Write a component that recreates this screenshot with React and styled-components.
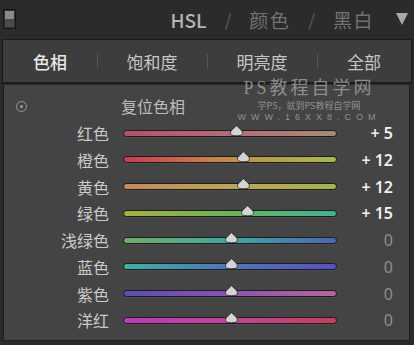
import React from "react";
import styled, { createGlobalStyle } from "styled-components";

const GlobalStyle = createGlobalStyle`
  html, body {
    margin: 0;
    padding: 0;
    background: #2b2b2b;
  }
  body {
    font-family: "Noto Sans", "Noto Sans CJK SC", sans-serif;
  }
`;

const cjk = `"Noto Sans CJK SC", "Noto Sans", sans-serif`;

const Frame = styled.div`
  width: 414px;
  height: 345px;
  background: #2b2b2b;
  display: flex;
  flex-direction: column;
  overflow: hidden;
`;

const Header = styled.div`
  height: 38px;
  display: flex;
  align-items: center;
  padding: 0 6px 0 3px;
  box-sizing: border-box;
`;

const PanelIcon = styled.div`
  width: 11px;
  height: 18px;
  border: 1px solid #161616;
  background: linear-gradient(#8a8a8a 0 50%, #4a4a4a 50% 100%);
  box-shadow: inset 0 0 0 1px #333;
`;

const Crumbs = styled.div`
  margin-left: auto;
  display: flex;
  align-items: center;
  font-family: ${cjk};
  font-size: 19px;
  color: #767676;
`;

const Crumb = styled.span`
  color: ${(p) => (p.$active ? "#b4b4b4" : "#727272")};
  font-weight: ${(p) => (p.$active ? 500 : 400)};
  letter-spacing: ${(p) => (p.$active ? "0" : "1.5px")};
`;

const Slash = styled.span`
  color: #5c5c5c;
  margin: 0 18px;
  font-size: 17px;
`;

const Arrow = styled.span`
  width: 0;
  height: 0;
  margin-left: 22px;
  border-left: 6px solid transparent;
  border-right: 6px solid transparent;
  border-top: 12px solid #a8a8a8;
`;

const Tabs = styled.div`
  height: 45px;
  margin: 1px 2px 0;
  background: #3d3d3d;
  border: 1px solid #1c1c1c;
  border-bottom-width: 2px;
  display: grid;
  grid-template-columns: 94px 110px 110px 1fr;
  align-items: center;
  box-sizing: border-box;
`;

const Tab = styled.div`
  position: relative;
  text-align: center;
  font-family: ${cjk};
  font-size: 17px;
  color: ${(p) => (p.$active ? "#e8e8e8" : "#c6c6c6")};
  font-weight: ${(p) => (p.$active ? 500 : 400)};
  &::before {
    content: "";
    display: ${(p) => (p.$first ? "none" : "block")};
    position: absolute;
    left: 0;
    top: 5px;
    bottom: 5px;
    width: 1px;
    background: #555;
  }
`;

const Panel = styled.div`
  position: relative;
  flex: 1;
  margin: 1px 4px 4px 3px;
  background: #444444;
  border: 1px solid #1e1e1e;
  border-top: none;
  padding-top: 8px;
  display: grid;
  grid-template-columns: 105px 214px 1fr;
  grid-auto-rows: 26.75px;
  column-gap: 14px;
  align-items: center;
`;

const ResetIcon = styled.div`
  justify-self: start;
  margin-left: 12px;
  width: 9px;
  height: 9px;
  border: 1.5px solid #9a9a9a;
  border-radius: 50%;
  display: flex;
  align-items: center;
  justify-content: center;
  &::after {
    content: "";
    width: 3px;
    height: 3px;
    border-radius: 50%;
    background: #9a9a9a;
  }
`;

const ResetText = styled.div`
  grid-column: 2 / 4;
  font-family: ${cjk};
  font-size: 16px;
  color: #bdbdbd;
  margin-left: -2px;
`;

const Label = styled.div`
  text-align: right;
  font-family: ${cjk};
  font-size: 16px;
  color: #cacaca;
`;

const Track = styled.div`
  position: relative;
  height: 5px;
  border: 1px solid #1d1d1d;
  border-radius: 4px;
  background: ${(p) => p.$gradient};
  box-shadow: 0 1px 0 rgba(255, 255, 255, 0.05);
`;

const Thumb = styled.svg`
  position: absolute;
  top: -6px;
  width: 13px;
  height: 11px;
  margin-left: -6.5px;
`;

const Value = styled.div`
  justify-self: end;
  margin-right: 16px;
  font-family: "Noto Sans", sans-serif;
  font-size: 16px;
  font-weight: ${(p) => (p.$zero ? 400 : 600)};
  color: ${(p) => (p.$zero ? "#8e8e8e" : "#f0f0f0")};
  white-space: pre;
`;

const Watermark = styled.div`
  position: absolute;
  top: 0;
  left: 230px;
  width: 150px;
  text-align: center;
  color: rgba(210, 210, 210, 0.55);
  line-height: 1;
  pointer-events: none;
`;

const WmTitle = styled.div`
  font-family: "Liberation Serif", "Noto Sans CJK SC", serif;
  font-size: 18px;
  letter-spacing: 3px;
  margin-top: -6px;
`;

const WmLine = styled.div`
  font-family: ${cjk};
  font-size: 9px;
  margin-top: 4px;
`;

const WmUrl = styled.div`
  font-family: "Liberation Sans", sans-serif;
  font-size: 9px;
  letter-spacing: 5px;
  margin-top: 3px;
`;

const rows = [
  { name: "红色", value: 5, g: "linear-gradient(90deg, #b4506c, #b4727a 60%, #a78a78)" },
  { name: "橙色", value: 12, g: "linear-gradient(90deg, #c83a52, #c98049 40%, #b5a14a 70%, #aab84a)" },
  { name: "黄色", value: 12, g: "linear-gradient(90deg, #c38a5c, #bca458 50%, #a6b44a)" },
  { name: "绿色", value: 15, g: "linear-gradient(90deg, #a6b040, #6ab45a 50%, #3fb494)" },
  { name: "浅绿色", value: 0, g: "linear-gradient(90deg, #6fae64, #3fa8a4 50%, #4a66b4)" },
  { name: "蓝色", value: 0, g: "linear-gradient(90deg, #3eb0a4, #4a80b8 40%, #5a50c0)" },
  { name: "紫色", value: 0, g: "linear-gradient(90deg, #5c4cb4, #8a54b0 50%, #b8649e)" },
  { name: "洋红", value: 0, g: "linear-gradient(90deg, #b83cbc, #c0449a 50%, #c2405a)" },
];

const tabs = ["色相", "饱和度", "明亮度", "全部"];

function SliderRow({ name, value, g }) {
  const x = 107 + value * 1.07;
  return (
    <>
      <Label>{name}</Label>
      <Track $gradient={g}>
        <Thumb style={{ left: x }} viewBox="0 0 13 11">
          <path
            d="M6.5 0.5 C8 3 12.5 5 12.5 8 C12.5 10 10.5 10.7 6.5 10.7 C2.5 10.7 0.5 10 0.5 8 C0.5 5 5 3 6.5 0.5 Z"
            fill="#d4d4d4"
            stroke="#2a2a2a"
            strokeWidth="0.8"
          />
        </Thumb>
      </Track>
      <Value $zero={value === 0}>{value === 0 ? "0" : `+ ${value}`}</Value>
    </>
  );
}

export default function App() {
  return (
    <Frame>
      <GlobalStyle />
      <Header>
        <PanelIcon />
        <Crumbs>
          <Crumb $active>HSL</Crumb>
          <Slash>/</Slash>
          <Crumb>颜色</Crumb>
          <Slash>/</Slash>
          <Crumb>黑白</Crumb>
          <Arrow />
        </Crumbs>
      </Header>
      <Tabs>
        {tabs.map((t, i) => (
          <Tab key={t} $active={i === 0} $first={i === 0}>
            {t}
          </Tab>
        ))}
      </Tabs>
      <Panel>
        <Watermark>
          <WmTitle>PS教程自学网</WmTitle>
          <WmLine>学PS，就到PS教程自学网</WmLine>
          <WmUrl>WWW.16XX8.COM</WmUrl>
        </Watermark>
        <ResetIcon />
        <ResetText>复位色相</ResetText>
        {rows.map((r) => (
          <SliderRow key={r.name} {...r} />
        ))}
      </Panel>
    </Frame>
  );
}
